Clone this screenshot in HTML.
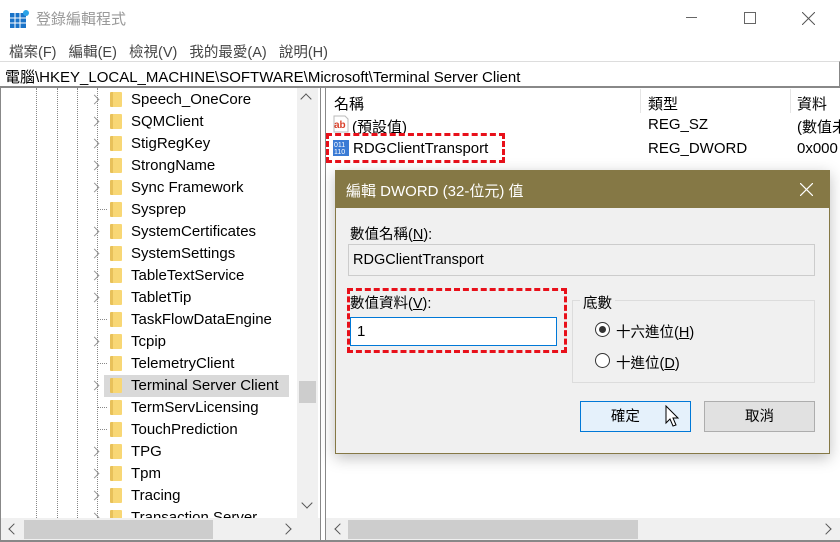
<!DOCTYPE html><html><head><meta charset="utf-8"><style>
*{margin:0;padding:0;box-sizing:border-box}
body{width:840px;height:542px;overflow:hidden;background:#fff;font-family:"Liberation Sans","Noto Sans CJK TC",sans-serif;font-size:15px;color:#000;position:relative}
.a{position:absolute;white-space:nowrap}
.fold{position:absolute;width:12px;height:15px;background:linear-gradient(90deg,#e8c15a 0 3px,#f8d775 3px);border-radius:1px}
.chev{position:absolute;width:7px;height:7px;border-right:1.5px solid #999;border-top:1.5px solid #999;transform:rotate(45deg)}
.dl{position:absolute;border-left:1px dotted #888}
.dh{position:absolute;border-top:1px dotted #888;width:9px}
</style></head><body>
<svg class="a" style="left:10px;top:9px" width="20" height="20"><rect x="0" y="4" width="16" height="15" fill="#1a73c8"/><path d="M0 9H16M0 14H16M5 4V19M10 4V19" stroke="#fff" stroke-width="1"/><circle cx="16" cy="4" r="3" fill="#2aa3e8"/></svg>
<div class="a" style="left:36px;top:8px;color:#999;font-size:15px">登錄編輯程式</div>
<div class="a" style="left:686px;top:17px;width:11px;border-top:1px solid #666"></div>
<div class="a" style="left:744px;top:12px;width:12px;height:12px;border:1px solid #666"></div>
<svg class="a" style="left:802px;top:12px" width="13" height="13"><path d="M0 0L13 13M13 0L0 13" stroke="#555" stroke-width="1"/></svg>
<div class="a" style="left:9px;top:41px;color:#444;font-size:14.5px">檔案(F)&nbsp;&nbsp;&nbsp;編輯(E)&nbsp;&nbsp;&nbsp;檢視(V)&nbsp;&nbsp;&nbsp;我的最愛(A)&nbsp;&nbsp;&nbsp;說明(H)</div>
<div class="a" style="left:0;top:61px;width:840px;height:27px;border-top:1px solid #ddd;border-bottom:2px solid #888;border-right:1px solid #888;background:#fff"></div>
<div class="a" style="left:5px;top:66px;font-size:15px">電腦\HKEY_LOCAL_MACHINE\SOFTWARE\Microsoft\Terminal Server Client</div>
<div class="a" style="left:0;top:88px;width:321px;height:454px;border:1px solid #888;border-top:none;border-bottom:none"></div>
<div class="dl" style="left:36px;top:88px;height:430px"></div>
<div class="dl" style="left:57px;top:88px;height:430px"></div>
<div class="dl" style="left:77px;top:88px;height:430px"></div>
<div class="dl" style="left:97px;top:88px;height:430px"></div>
<div class="a" style="left:104px;top:375px;width:185px;height:22px;background:#d9d9d9"></div>
<div id="tree"></div>
<script>
var items=[["Speech_OneCore",1],["SQMClient",1],["StigRegKey",1],["StrongName",1],["Sync Framework",1],["Sysprep",0],["SystemCertificates",1],["SystemSettings",1],["TableTextService",1],["TabletTip",1],["TaskFlowDataEngine",0],["Tcpip",1],["TelemetryClient",0],["Terminal Server Client",1],["TermServLicensing",0],["TouchPrediction",0],["TPG",1],["Tpm",1],["Tracing",1],["Transaction Server",1]];
var h="";items.forEach(function(it,i){var y=89+i*22;
h+=(it[1]?'<div class="chev" style="left:91px;top:'+(y+7)+'px"></div>':'<div class="dh" style="left:98px;top:'+(y+10)+'px"></div>');
h+='<div class="fold" style="left:110px;top:'+(y+3)+'px"></div><div class="a" style="left:131px;top:'+y+'px;line-height:22px;font-size:15px">'+it[0]+'</div>';});
document.getElementById("tree").innerHTML=h;
</script>
<div class="a" style="left:297px;top:88px;width:21px;height:430px;background:#f0f0f0"></div>
<div class="a" style="left:299px;top:381px;width:17px;height:22px;background:#cdcdcd"></div>
<div class="a" style="left:302px;top:95px;width:8px;height:8px;border-left:1.5px solid #555;border-top:1.5px solid #555;transform:rotate(45deg)"></div>
<div class="a" style="left:303px;top:499px;width:8px;height:8px;border-right:1.5px solid #555;border-bottom:1.5px solid #555;transform:rotate(45deg)"></div>
<div class="a" style="left:1px;top:518px;width:319px;height:22px;background:#f0f0f0"></div>
<div class="a" style="left:24px;top:520px;width:189px;height:19px;background:#cdcdcd"></div>
<div class="a" style="left:10px;top:525px;width:8px;height:8px;border-left:1.5px solid #555;border-bottom:1.5px solid #555;transform:rotate(45deg)"></div>
<div class="a" style="left:282px;top:525px;width:8px;height:8px;border-right:1.5px solid #555;border-top:1.5px solid #555;transform:rotate(45deg)"></div>
<div class="a" style="left:0;top:540px;width:840px;border-top:2px solid #888"></div>
<div class="a" style="left:325px;top:88px;width:515px;height:454px;border-left:1px solid #888"></div>
<div class="a" style="left:640px;top:89px;height:24px;border-left:1px solid #e5e5e5"></div>
<div class="a" style="left:790px;top:89px;height:24px;border-left:1px solid #e5e5e5"></div>
<div class="a" style="left:334px;top:93px">名稱</div>
<div class="a" style="left:648px;top:93px">類型</div>
<div class="a" style="left:797px;top:93px">資料</div>
<svg class="a" style="left:332px;top:115px" width="18" height="18"><path d="M2 1H13L16 4V17H2Z" fill="#fff" stroke="#bbb"/><text x="2" y="13" font-size="10" font-weight="bold" fill="#d9412b" font-family="Liberation Sans">ab</text></svg>
<div class="a" style="left:352px;top:116px">(預設值)</div>
<div class="a" style="left:648px;top:116px">REG_SZ</div>
<div class="a" style="left:797px;top:116px">(數值未</div>
<svg class="a" style="left:332px;top:139px" width="18" height="18"><rect x="1" y="1" width="16" height="16" fill="#3a7bd5"/><text x="2" y="8" font-size="7" fill="#fff" font-family="Liberation Sans">011</text><text x="2" y="15" font-size="7" fill="#fff" font-family="Liberation Sans">110</text></svg>
<div class="a" style="left:353px;top:140px">RDGClientTransport</div>
<div class="a" style="left:648px;top:140px">REG_DWORD</div>
<div class="a" style="left:797px;top:140px">0x000</div>
<div class="a" style="left:326px;top:133px;width:179px;height:30px;border:3px dashed #e8101a"></div>
<div class="a" style="left:326px;top:518px;width:514px;height:22px;background:#f0f0f0"></div>
<div class="a" style="left:348px;top:520px;width:290px;height:19px;background:#cdcdcd"></div>
<div class="a" style="left:336px;top:525px;width:8px;height:8px;border-left:1.5px solid #555;border-bottom:1.5px solid #555;transform:rotate(45deg)"></div>
<div class="a" style="left:822px;top:525px;width:8px;height:8px;border-right:1.5px solid #555;border-top:1.5px solid #555;transform:rotate(45deg)"></div>
<div class="a" style="left:335px;top:170px;width:495px;height:284px;background:#f0f0f0;border:1px solid #857845;box-shadow:0 4px 14px rgba(0,0,0,.25)"></div>
<div class="a" style="left:335px;top:170px;width:495px;height:38px;background:#857845"></div>
<div class="a" style="left:346px;top:180px;color:#fff;font-size:15px">編輯 DWORD (32-位元) 值</div>
<svg class="a" style="left:800px;top:183px" width="13" height="13"><path d="M0 0L13 13M13 0L0 13" stroke="#fff" stroke-width="1.2"/></svg>
<div class="a" style="left:350px;top:223px;font-size:14.5px">數值名稱(<u>N</u>):</div>
<div class="a" style="left:348px;top:244px;width:467px;height:32px;background:#f0f0f0;border:1px solid #ccc;padding:7px 4px;font-size:14.5px">RDGClientTransport</div>
<div class="a" style="left:350px;top:292px;font-size:14.5px">數值資料(<u>V</u>):</div>
<div class="a" style="left:350px;top:317px;width:207px;height:29px;background:#fff;border:1px solid #0078d7;padding:5px 6px;font-size:15px">1</div>
<div class="a" style="left:347px;top:288px;width:220px;height:65px;border:3px dashed #e8101a"></div>
<div class="a" style="left:572px;top:300px;width:243px;height:83px;border:1px solid #dcdcdc"></div>
<div class="a" style="left:580px;top:292px;background:#f0f0f0;padding:0 3px;font-size:14.5px">底數</div>
<div class="a" style="left:595px;top:322px;width:15px;height:15px;border:1px solid #333;border-radius:50%;background:#fff"></div>
<div class="a" style="left:599px;top:326px;width:7px;height:7px;border-radius:50%;background:#333"></div>
<div class="a" style="left:616px;top:321px;font-size:14.5px">十六進位(<u>H</u>)</div>
<div class="a" style="left:595px;top:353px;width:15px;height:15px;border:1px solid #333;border-radius:50%;background:#fff"></div>
<div class="a" style="left:616px;top:352px;font-size:14.5px">十進位(<u>D</u>)</div>
<div class="a" style="left:580px;top:401px;width:111px;height:31px;border:1px solid #0078d7;background:#e5f1fb;text-align:center;line-height:30px;font-size:14.5px">確定&nbsp;&nbsp;&nbsp;&nbsp;&nbsp;</div>
<svg class="a" style="left:665px;top:405px" width="16" height="24"><path d="M1 1V18L5 14L8 21L11 20L8 13H13Z" fill="#fff" stroke="#000" stroke-width="1"/></svg>
<div class="a" style="left:704px;top:401px;width:111px;height:31px;border:1px solid #adadad;background:#e1e1e1;text-align:center;line-height:30px;font-size:14.5px">取消</div>
</body></html>
